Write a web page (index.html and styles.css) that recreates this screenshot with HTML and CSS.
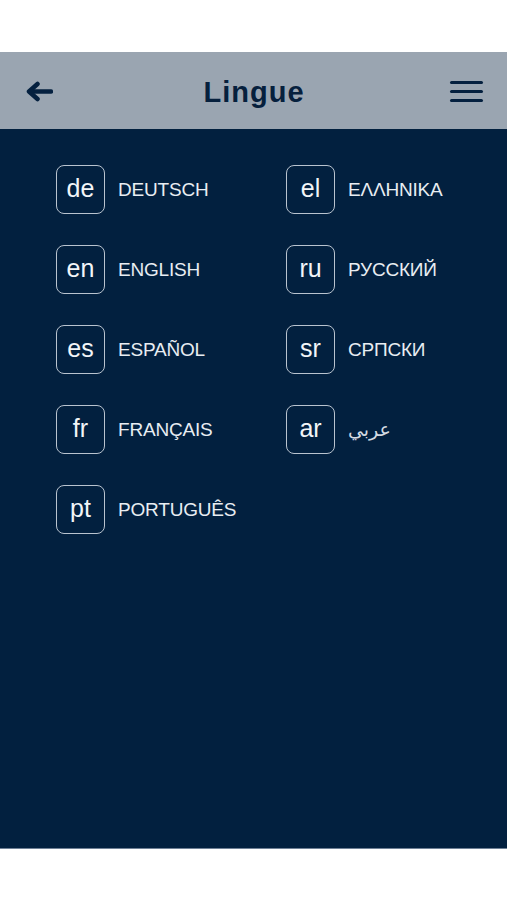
FILE: index.html
```html
<!DOCTYPE html>
<html lang="it">
<head>
  <meta charset="UTF-8">
  <title>Lingue</title>
  <link rel="stylesheet" href="styles.css">
</head>
<body>
  <div class="status-space"></div>
  <header class="topbar">
    <button class="icon-btn back" aria-label="Indietro">
      <svg width="28" height="21" viewBox="0 0 28 21">
        <path d="M26 10.5H6" stroke="#04203f" stroke-width="4.5" stroke-linecap="round" fill="none"/>
        <path d="M12.5 3L4 10.5L12.5 18" stroke="#04203f" stroke-width="4.5" stroke-linecap="round" stroke-linejoin="round" fill="none"/>
      </svg>
    </button>
    <h1>Lingue</h1>
    <button class="icon-btn menu" aria-label="Menu">
      <span></span><span></span><span></span>
    </button>
  </header>

  <main class="languages">
    <a class="lang"><span class="code">de</span><span class="name">DEUTSCH</span></a>
    <a class="lang"><span class="code">el</span><span class="name">ΕΛΛΗΝΙΚΑ</span></a>
    <a class="lang"><span class="code">en</span><span class="name">ENGLISH</span></a>
    <a class="lang"><span class="code">ru</span><span class="name">РУССКИЙ</span></a>
    <a class="lang"><span class="code">es</span><span class="name">ESPAÑOL</span></a>
    <a class="lang"><span class="code">sr</span><span class="name">СРПСКИ</span></a>
    <a class="lang"><span class="code">fr</span><span class="name">FRANÇAIS</span></a>
    <a class="lang"><span class="code">ar</span><span class="name arabic" dir="rtl">عربي</span></a>
    <a class="lang"><span class="code">pt</span><span class="name">PORTUGUÊS</span></a>
  </main>
</body>
</html>
```

FILE: styles.css
```css
body {
  margin: 0;
  padding: 0;
  background: #ffffff;
  font-family: "Liberation Sans", Arial, sans-serif;
}

.status-space {
  height: 52px;
}

.topbar {
  height: 77px;
  background: #9aa5b1;
  display: flex;
  align-items: center;
  justify-content: space-between;
  padding: 0 24px 0 25px;
  box-sizing: border-box;
}

.topbar h1 {
  margin: 0;
  font-size: 29px;
  font-weight: bold;
  letter-spacing: 1px;
  color: #06203d;
  padding-top: 3px;
}

.icon-btn {
  background: none;
  border: none;
  padding: 0;
  cursor: pointer;
}

.back {
  width: 33px;
  display: flex;
  padding-top: 2px;
}

.menu {
  width: 33px;
  display: flex;
  flex-direction: column;
  gap: 6px;
  padding-top: 1px;
}

.menu span {
  display: block;
  height: 3px;
  background: #04203f;
  border-radius: 2px;
}

.languages {
  height: 720px;
  box-sizing: border-box;
  background: #02203f;
  border-bottom: 1px solid #6e8096;
  padding: 36px 0 0 56px;
  display: grid;
  grid-template-columns: 230px 200px;
  grid-auto-rows: 48px;
  row-gap: 32px;
  align-content: start;
}

.lang {
  display: flex;
  align-items: center;
  gap: 13px;
  color: #e8edf2;
  text-decoration: none;
}

.code {
  width: 49px;
  height: 49px;
  box-sizing: border-box;
  border: 1.5px solid #b9c3cf;
  border-radius: 8px;
  display: flex;
  align-items: center;
  justify-content: center;
  font-size: 25px;
  color: #f2f5f8;
  padding-bottom: 1px;
}

.name {
  font-size: 19px;
  letter-spacing: -0.2px;
  padding-top: 2px;
}

.arabic {
  font-family: "DejaVu Sans", sans-serif;
  font-size: 19px;
  letter-spacing: 0;
  color: #d3dae2;
  padding-top: 0;
}
```
